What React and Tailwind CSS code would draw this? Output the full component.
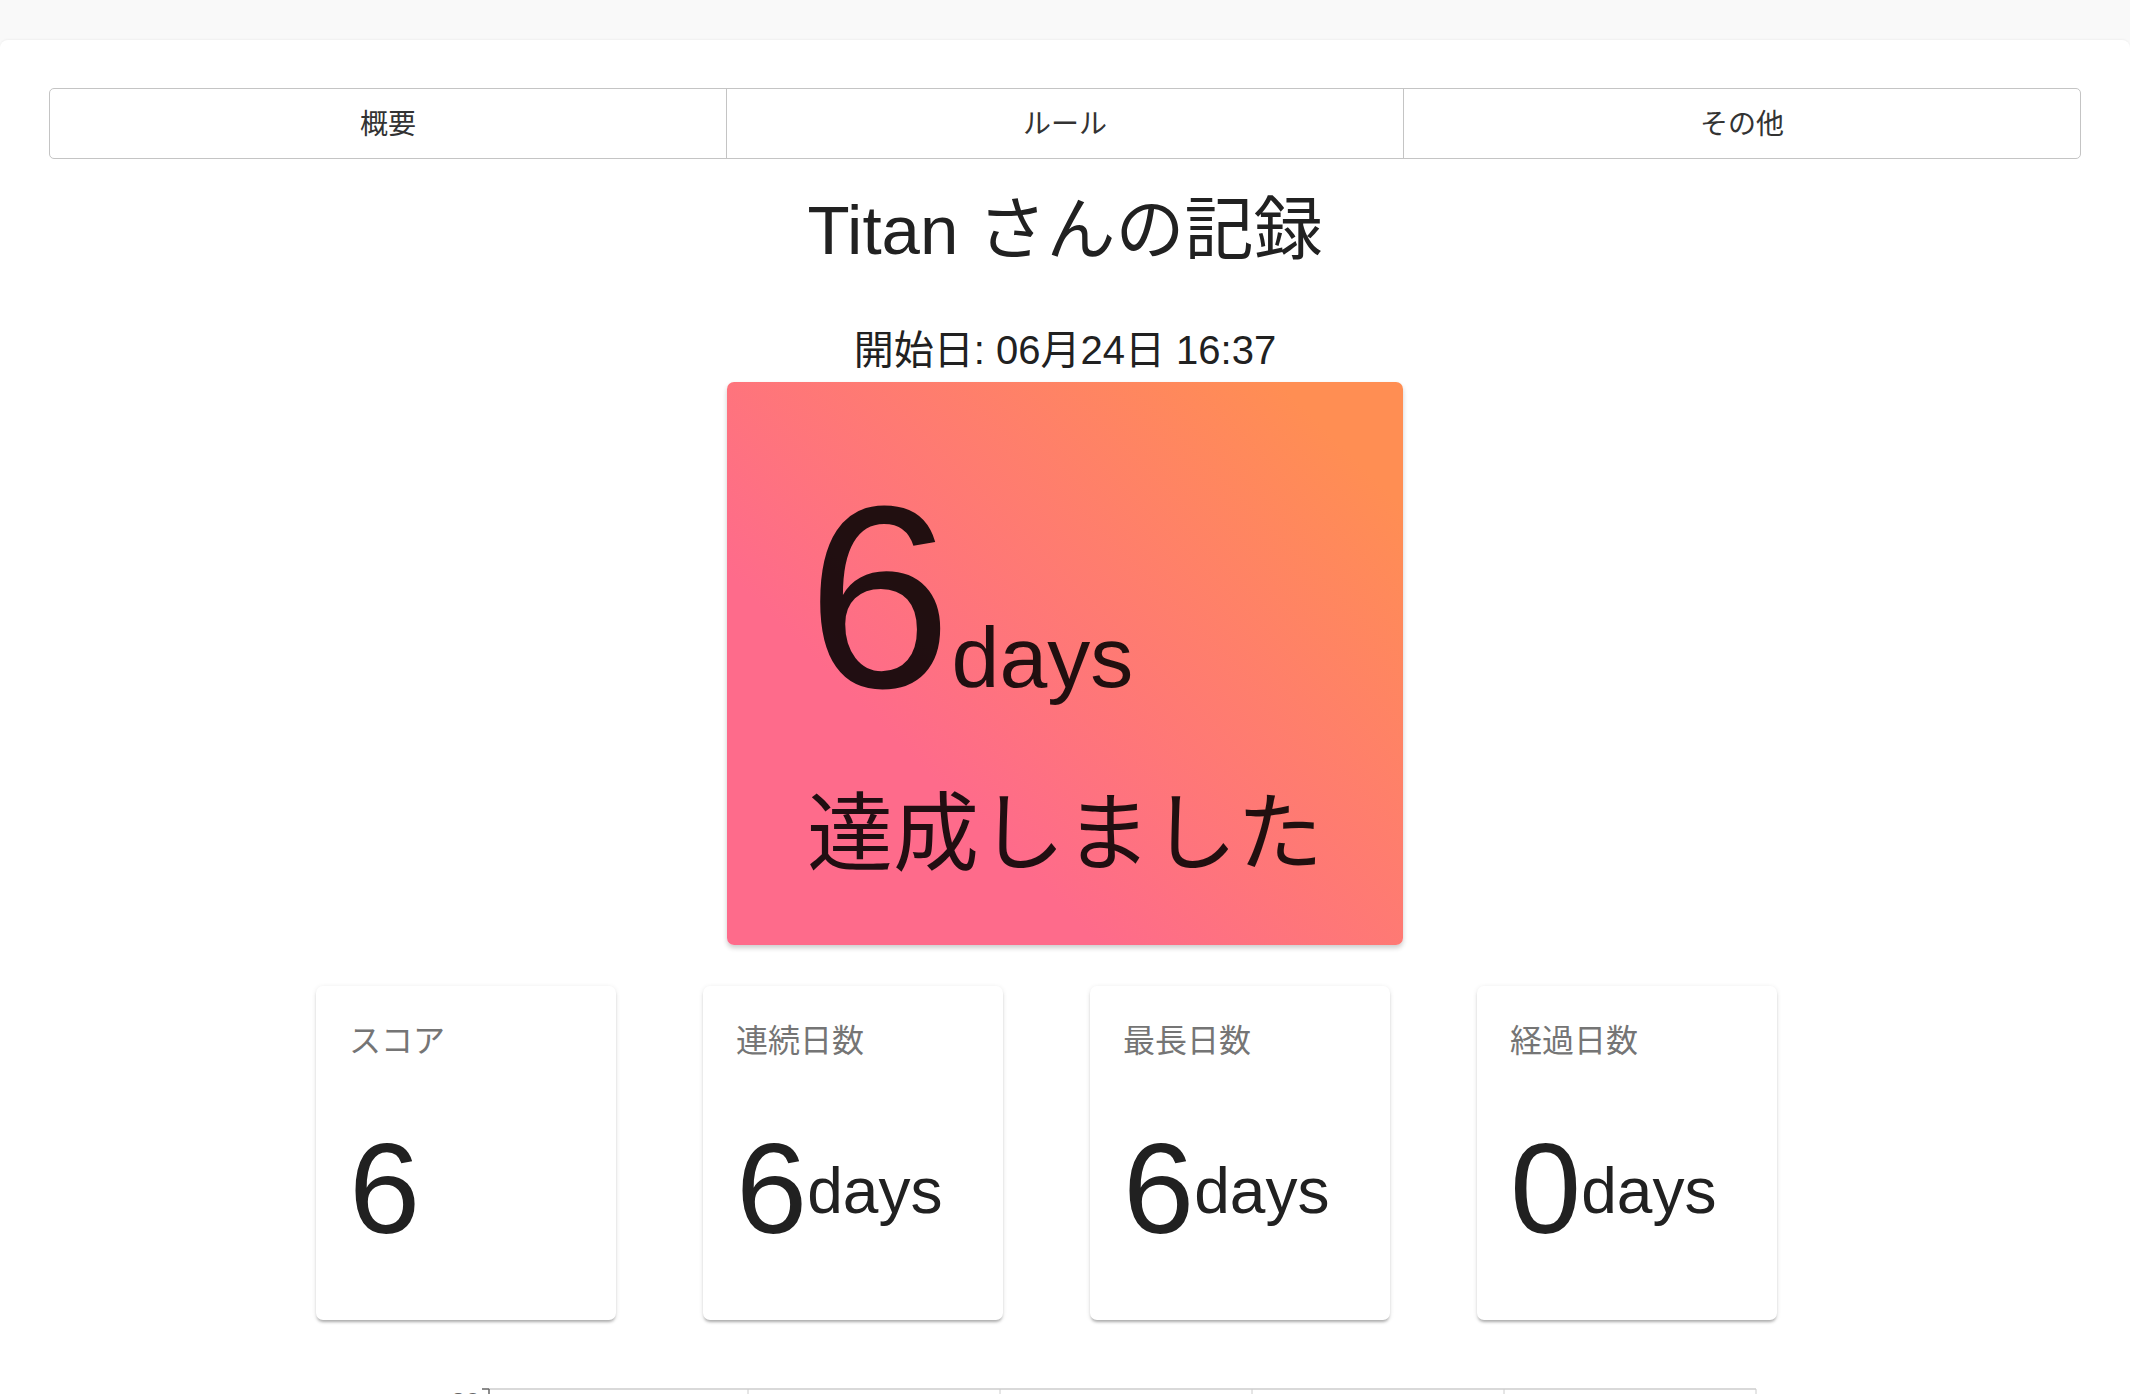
import React from 'react';

const tabs = ['概要', 'ルール', 'その他'];

const stats = [
  { label: 'スコア', value: 6, unit: '' },
  { label: '連続日数', value: 6, unit: 'days' },
  { label: '最長日数', value: 6, unit: 'days' },
  { label: '経過日数', value: 0, unit: 'days' },
];

const StatCard = ({ label, value, unit }) => (
  <div className="w-[300px] h-[334px] bg-white rounded-[7px] px-[33px] pt-[28px] shadow-[0_3px_3px_-1px_rgba(0,0,0,0.28),0_1px_5px_rgba(0,0,0,0.1)]">
    <div className="font-['Noto_Sans_CJK_JP',sans-serif] text-[32px] leading-[48px] text-[#757575]">{label}</div>
    <div className="mt-[63px] text-[128px] leading-[128px] text-[#212121] whitespace-nowrap">
      {value}
      {unit && <span className="text-[64px] leading-none align-[20px]">{unit}</span>}
    </div>
  </div>
);

const Chart = () => (
  <svg className="ml-[351px] mt-[60px] block" width="1400" height="300" viewBox="0 0 1400 300">
    <line x1="89" y1="9" x2="1356" y2="9" stroke="#cccccc" strokeWidth="1.5" />
    {[348, 600, 852, 1104, 1356].map((x) => (
      <line key={x} x1={x} y1="9" x2={x} y2="300" stroke="#cccccc" strokeWidth="1" />
    ))}
    <line x1="89" y1="9" x2="89" y2="300" stroke="#666666" strokeWidth="1.5" />
    <line x1="82" y1="9" x2="89" y2="9" stroke="#666666" strokeWidth="1.5" />
    <text x="80" y="31" textAnchor="end" fontSize="26" fill="#666666" fontFamily="Liberation Sans, sans-serif">30</text>
  </svg>
);

export default function App() {
  return (
    <div className="min-h-screen bg-[#f9f9f9] pt-10 font-['Liberation_Sans','Noto_Sans_CJK_JP',sans-serif]">
      <div className="min-h-[1400px] bg-white rounded-t-lg px-[49px] pt-[48px] shadow-[0_-1px_2px_rgba(0,0,0,0.04)]">
        {/* tabs */}
        <div className="flex h-[71px] rounded-[5px] border border-[#c4c4c4]">
          {tabs.map((t) => (
            <button
              key={t}
              className="flex-1 flex items-center justify-center pb-[3px] border-l border-[#c4c4c4] first:border-l-0 font-['Noto_Sans_CJK_JP',sans-serif] text-[28px] text-[#333333]"
            >
              {t}
            </button>
          ))}
        </div>

        <h1 className="mt-[32px] text-center text-[69px] leading-[80px] text-[#212121]">Titan さんの記録</h1>

        <p className="mt-[55px] text-center text-[40px] leading-[48px] text-[#212121]">開始日: 06月24日 16:37</p>

        {/* achievement card */}
        <div className="mx-auto mt-[8px] w-[676px] h-[563px] rounded-[7px] bg-[linear-gradient(45deg,#FE6B8B_30%,#FF8E53_90%)] shadow-[0_3px_5px_rgba(0,0,0,0.2)] flex justify-center pt-[85px] text-[rgba(0,0,0,0.87)]">
          <div>
            <div className="text-[260px] leading-[260px] whitespace-nowrap">
              6<span className="text-[86px] leading-none">days</span>
            </div>
            <div className="mt-[50px] font-['Noto_Sans_CJK_JP',sans-serif] text-[86px] leading-[100px] whitespace-nowrap">達成しました</div>
          </div>
        </div>

        {/* stats */}
        <div className="mt-[41px] flex gap-[87px] pl-[267px]">
          {stats.map((s) => (
            <StatCard key={s.label} {...s} />
          ))}
        </div>

        <Chart />
      </div>
    </div>
  );
}
